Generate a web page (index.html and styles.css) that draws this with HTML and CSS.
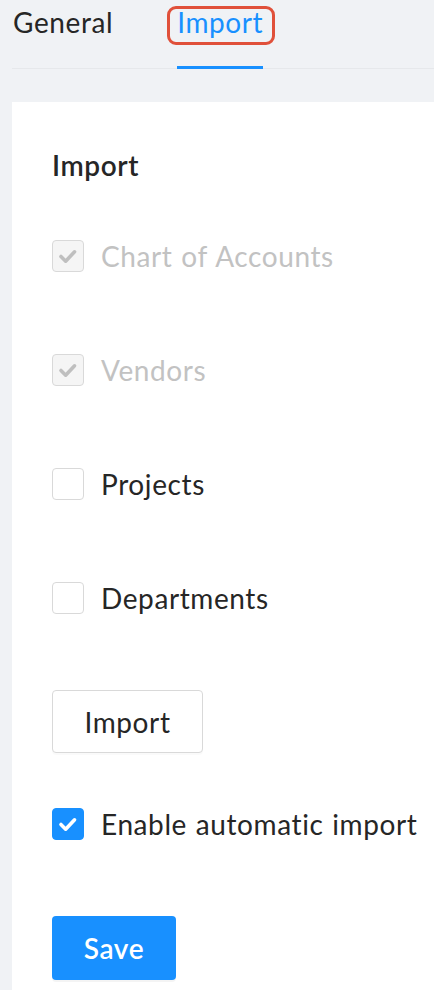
FILE: index.html
```html
<!DOCTYPE html>
<html lang="en">
<head>
<meta charset="utf-8">
<title>Import settings</title>
<link rel="stylesheet" href="styles.css">
</head>
<body>
<nav class="tabs">
  <div class="tab">General</div>
  <div class="tab tab-active">Import<span class="annot"></span></div>
</nav>
<main class="card">
  <h2 class="heading">Import</h2>
  <label class="check-row disabled">
    <span class="box box-disabled"><svg viewBox="0 0 32 32"><polyline points="8.5,16.5 13.5,21.5 23,11.5" /></svg></span>
    <span class="label">Chart of Accounts</span>
  </label>
  <label class="check-row disabled">
    <span class="box box-disabled"><svg viewBox="0 0 32 32"><polyline points="8.5,16.5 13.5,21.5 23,11.5" /></svg></span>
    <span class="label">Vendors</span>
  </label>
  <label class="check-row">
    <span class="box"></span>
    <span class="label">Projects</span>
  </label>
  <label class="check-row">
    <span class="box"></span>
    <span class="label">Departments</span>
  </label>
  <button class="btn btn-default">Import</button>
  <label class="check-row auto">
    <span class="box box-checked"><svg viewBox="0 0 32 32"><polyline points="8.5,16.5 13.5,21.5 23,11.5" /></svg></span>
    <span class="label">Enable automatic import</span>
  </label>
  <button class="btn btn-primary">Save</button>
</main>
</body>
</html>
```
FILE: styles.css
```css
* { box-sizing: border-box; }
html, body { margin: 0; padding: 0; }
body {
  background: #f0f2f5;
  font-family: "Lato", "Noto Sans", sans-serif;
  color: #262626;
  width: 434px;
  overflow: hidden;
  letter-spacing: 0.6px;
  word-spacing: 1px;
}
.tabs {
  display: flex;
  margin-left: 12px;
  padding-left: 1px;
  height: 69px;
  border-bottom: 1px solid #e6e8eb;
}
.tab {
  position: relative;
  font-size: 28px;
  line-height: 40px;
  padding-top: 2px;
  height: 69px;
  margin-bottom: -1px;
  border-bottom: 3px solid transparent;
  white-space: nowrap;
}
.tab + .tab { margin-left: 64px; }
.tab-active {
  color: #1890ff;
  border-bottom-color: #1890ff;
}
.annot {
  position: absolute;
  left: -10px;
  top: 6px;
  width: 108px;
  height: 39px;
  border: 3px solid #e0503a;
  border-radius: 9px;
}
.card {
  background: #fff;
  margin: 33px 0 0 12px;
  min-height: 900px;
  padding: 46px 0 0 40px;
  display: flex;
  flex-direction: column;
  align-items: flex-start;
}
.heading {
  margin: 0;
  font-size: 28px;
  font-weight: 600;
  line-height: 34px;
  color: #262626;
}
.check-row {
  display: flex;
  align-items: center;
  height: 32px;
  margin-top: 82px;
  font-size: 28px;
  white-space: nowrap;
}
.heading + .check-row { margin-top: 58px; }
.check-row.disabled { color: #c2c2c2; }
.box {
  width: 32px;
  height: 32px;
  border: 1.5px solid #d9d9d9;
  border-radius: 4px;
  background: #fff;
  margin-right: 17px;
  flex: none;
  display: flex;
}
.box svg { width: 100%; height: 100%; }
.box polyline {
  fill: none;
  stroke-width: 3.8;
  stroke-linecap: round;
  stroke-linejoin: round;
}
.box-disabled { background: #f5f5f5; }
.box-disabled polyline { stroke: #bfbfbf; }
.box-checked { background: #1890ff; border-color: #1890ff; }
.box-checked polyline { stroke: #fff; }
.btn {
  font-family: inherit;
  font-size: 28px;
  letter-spacing: 0.6px;
  border-radius: 4px;
  cursor: pointer;
}
.btn-default {
  margin-top: 76px;
  width: 151px;
  height: 63px;
  background: #fff;
  color: #262626;
  border: 1.5px solid #d9d9d9;
  box-shadow: 0 2px 0 rgba(0, 0, 0, 0.02);
}
.check-row.auto { margin-top: 55px; }
.btn-primary {
  margin-top: 76px;
  width: 124px;
  height: 64px;
  background: #1890ff;
  color: #fff;
  border: none;
  font-weight: 600;
  box-shadow: 0 2px 0 rgba(0, 0, 0, 0.045);
}
```
